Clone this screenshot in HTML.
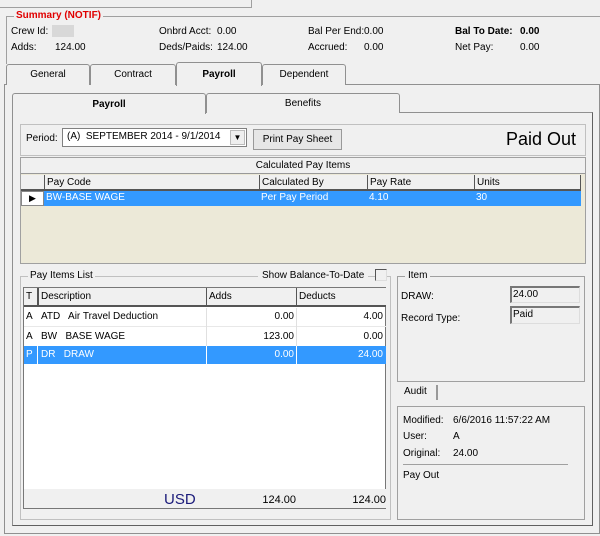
<!DOCTYPE html>
<html><head><style>
*{margin:0;padding:0;box-sizing:border-box}
body{width:600px;height:536px;background:#f0f0f0;font-family:"Liberation Sans",sans-serif;font-size:10px;color:#000;position:relative;overflow:hidden}
.a{position:absolute;white-space:nowrap}
.box{position:absolute;border:1px solid #a0a0a0}
.tab{position:absolute;border:1px solid #909090;border-bottom:none;background:#f0f0f0;text-align:center;border-radius:3px 3px 0 0}
.r{text-align:right}
</style></head><body>
<div class="box" style="left:0;top:0;width:252px;height:8px;border-top:none;border-left:none"></div>
<div class="box" style="left:6px;top:16px;width:600px;height:48px;border-right:none;border-bottom:none"></div>
<div class="a" style="left:14px;top:10px;background:#f0f0f0;color:#e00000;font-weight:bold;padding:0 2px">Summary (NOTIF)</div>
<div class="a" style="left:11px;top:26px">Crew Id:</div>
<div class="a" style="left:52px;top:25px;width:22px;height:12px;background:#d8d8d8"></div>
<div class="a" style="left:11px;top:42px">Adds:</div><div class="a" style="left:55px;top:42px">124.00</div>
<div class="a" style="left:159px;top:26px">Onbrd Acct:</div><div class="a" style="left:217px;top:26px">0.00</div>
<div class="a" style="left:159px;top:42px">Deds/Paids:</div><div class="a" style="left:217px;top:42px">124.00</div>
<div class="a" style="left:308px;top:26px">Bal Per End:</div><div class="a" style="left:364px;top:26px">0.00</div>
<div class="a" style="left:308px;top:42px">Accrued:</div><div class="a" style="left:364px;top:42px">0.00</div>
<div class="a" style="left:455px;top:26px;font-weight:bold">Bal To Date:</div><div class="a" style="left:520px;top:26px;font-weight:bold">0.00</div>
<div class="a" style="left:455px;top:42px">Net Pay:</div><div class="a" style="left:520px;top:42px">0.00</div>

<div class="box" style="left:4px;top:84px;width:596px;height:450px;border-color:#909090"></div>
<div class="tab" style="left:6px;top:64px;width:84px;height:21px;line-height:19px">General</div>
<div class="tab" style="left:90px;top:64px;width:86px;height:21px;line-height:19px">Contract</div>
<div class="tab" style="left:262px;top:64px;width:84px;height:21px;line-height:19px">Dependent</div>
<div class="tab" style="left:176px;top:62px;width:86px;height:24px;line-height:23px;font-weight:bold">Payroll</div>

<div class="box" style="left:12px;top:112px;width:581px;height:414px;border-color:#909090;border-right-color:#606060;border-bottom-color:#606060"></div>
<div class="tab" style="left:206px;top:93px;width:194px;height:20px;line-height:19px">Benefits</div>
<div class="tab" style="left:12px;top:93px;width:194px;height:21px;line-height:21px;font-weight:bold">Payroll</div>

<div class="box" style="left:20px;top:124px;width:566px;height:32px;border-color:#c0c0c0"></div>
<div class="a" style="left:26px;top:133px">Period:</div>
<div class="box" style="left:62px;top:128px;width:185px;height:19px;background:#fff;border-color:#808080"></div>
<div class="a" style="left:67px;top:131px">(A)&nbsp; SEPTEMBER 2014 - 9/1/2014</div>
<div class="a" style="left:230px;top:130px;width:15px;height:15px;background:#eee;border:1px solid #bbb;font-size:8px;text-align:center;line-height:14px">▼</div>
<div class="box" style="left:253px;top:129px;width:89px;height:21px;background:#e6e6e6;border-color:#999;text-align:center;line-height:19px">Print Pay Sheet</div>
<div class="a" style="left:506px;top:129px;font-size:18px">Paid Out</div>

<div class="box" style="left:20px;top:157px;width:566px;height:107px;background:#ece9d8;border-color:#a0a0a0"></div>
<div class="a" style="left:21px;top:158px;width:564px;height:16px;background:#f0f0f0;border-bottom:1px solid #999;text-align:center;line-height:16px">Calculated Pay Items</div>
<div class="a" style="left:21px;top:175px;width:560px;height:16px;background:#f0f0f0;border-bottom:2px solid #555;border-right:1px solid #555"></div>
<div class="a" style="left:44px;top:175px;height:16px;border-left:1px solid #555;line-height:15px;padding-left:2px;width:215px">Pay Code</div>
<div class="a" style="left:259px;top:175px;height:16px;border-left:1px solid #555;line-height:15px;padding-left:2px;width:108px">Calculated By</div>
<div class="a" style="left:367px;top:175px;height:16px;border-left:1px solid #555;line-height:15px;padding-left:2px;width:107px">Pay Rate</div>
<div class="a" style="left:474px;top:175px;height:16px;border-left:1px solid #555;line-height:15px;padding-left:2px;width:107px">Units</div>
<div class="a" style="left:21px;top:191px;width:23px;height:15px;background:#fff;border:1px solid #888;font-size:9px;padding-left:7px;line-height:13px">▶</div>
<div class="a" style="left:44px;top:191px;width:537px;height:15px;background:#3399ff;color:#fff;line-height:14px">
<span class="a" style="left:2px">BW-BASE WAGE</span><span class="a" style="left:217px">Per Pay Period</span><span class="a" style="left:325px">4.10</span><span class="a" style="left:432px">30</span></div>

<div class="box" style="left:20px;top:276px;width:371px;height:244px;border-color:#c0c0c0"></div>
<div class="a" style="left:28px;top:270px;padding:0 2px;background:#f0f0f0">Pay Items List</div>
<div class="a" style="left:258px;top:270px;padding:0 4px;background:#f0f0f0">Show Balance-To-Date</div>
<div class="a" style="left:375px;top:269px;width:12px;height:12px;border:1px solid #555;border-right-color:#ddd;border-bottom-color:#ddd;background:#f0f0f0"></div>
<div class="box" style="left:23px;top:287px;width:363px;height:222px;background:#fff;border-color:#777"></div>
<div class="a" style="left:24px;top:288px;width:362px;height:19px;background:#f0f0f0;border-bottom:2px solid #555"></div>
<div class="a" style="left:26px;top:291px">T</div>
<div class="a" style="left:37px;top:288px;height:19px;border-left:2px solid #555;padding:3px 2px;width:169px">Description</div>
<div class="a" style="left:206px;top:288px;height:19px;border-left:1px solid #555;padding:3px 2px;width:90px">Adds</div>
<div class="a" style="left:296px;top:288px;height:19px;border-left:1px solid #555;padding:3px 2px;width:90px">Deducts</div>
<div class="a" style="left:24px;top:308px;width:362px;height:19px;border-bottom:1px solid #e8e8e8"></div>
<div class="a" style="left:26px;top:311px">A</div><div class="a" style="left:41px;top:311px">ATD&nbsp;&nbsp; Air Travel Deduction</div>
<div class="a r" style="left:206px;top:311px;width:88px">0.00</div><div class="a r" style="left:296px;top:311px;width:87px">4.00</div>
<div class="a" style="left:206px;top:308px;height:56px;border-left:1px solid #e0e0e0"></div>
<div class="a" style="left:296px;top:308px;height:56px;border-left:1px solid #e0e0e0"></div>
<div class="a" style="left:26px;top:331px">A</div><div class="a" style="left:41px;top:331px">BW&nbsp;&nbsp; BASE WAGE</div>
<div class="a r" style="left:206px;top:331px;width:88px">123.00</div><div class="a r" style="left:296px;top:331px;width:87px">0.00</div>
<div class="a" style="left:24px;top:346px;width:362px;height:18px;background:#3399ff;color:#fff">
<span class="a" style="left:2px;top:3px">P</span><span class="a" style="left:13px;top:0;height:18px;border-left:1px solid #fff"></span><span class="a" style="left:17px;top:3px">DR&nbsp;&nbsp; DRAW</span>
<span class="a" style="left:182px;top:0;height:18px;border-left:1px solid #fff"></span><span class="a" style="left:272px;top:0;height:18px;border-left:1px solid #fff"></span>
<span class="a r" style="left:182px;top:3px;width:88px">0.00</span><span class="a r" style="left:272px;top:3px;width:87px">24.00</span></div>
<div class="a" style="left:24px;top:489px;width:362px;height:19px;background:#f0f0f0"></div>
<div class="a" style="left:164px;top:491px;font-size:15px;color:#1a1a7a">USD</div>
<div class="a r" style="left:206px;top:494px;width:90px;font-size:11px">124.00</div>
<div class="a r" style="left:296px;top:494px;width:90px;font-size:11px">124.00</div>

<div class="box" style="left:397px;top:276px;width:188px;height:106px;border-color:#a0a0a0"></div>
<div class="a" style="left:405px;top:270px;padding:0 3px;background:#f0f0f0">Item</div>
<div class="a" style="left:401px;top:291px">DRAW:</div>
<div class="a" style="left:510px;top:286px;width:70px;height:17px;border:1px solid #ddd;border-top:2px solid #777;border-left:2px solid #777;padding-left:1px;line-height:14px">24.00</div>
<div class="a" style="left:401px;top:313px">Record Type:</div>
<div class="a" style="left:510px;top:306px;width:70px;height:18px;border:1px solid #ddd;border-top:2px solid #777;border-left:2px solid #777;padding-left:1px;line-height:14px">Paid</div>
<div class="a" style="left:398px;top:385px;width:40px;height:15px;border-right:2px solid #999;padding:1px 6px">Audit</div>
<div class="box" style="left:397px;top:406px;width:188px;height:114px;border-color:#a0a0a0"></div>
<div class="a" style="left:403px;top:415px">Modified:</div><div class="a" style="left:453px;top:415px">6/6/2016 11:57:22 AM</div>
<div class="a" style="left:403px;top:431px">User:</div><div class="a" style="left:453px;top:431px">A</div>
<div class="a" style="left:403px;top:448px">Original:</div><div class="a" style="left:453px;top:448px">24.00</div>
<div class="a" style="left:403px;top:464px;width:165px;border-top:1px solid #a0a0a0"></div>
<div class="a" style="left:403px;top:470px">Pay Out</div>
</body></html>
